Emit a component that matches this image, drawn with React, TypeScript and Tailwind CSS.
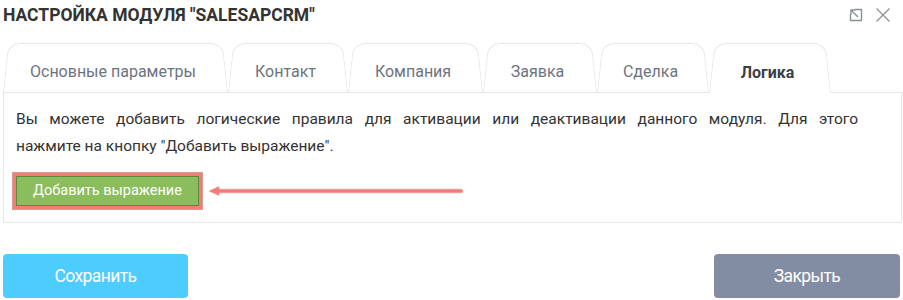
import React from 'react';

const tabs = [
  { label: 'Основные параметры', w: 'w-[225px]' },
  { label: 'Контакт', w: 'w-[120px]' },
  { label: 'Компания', w: 'w-[135px]' },
  { label: 'Заявка', w: 'w-[114px]' },
  { label: 'Сделка', w: 'w-[112px]' },
  { label: 'Логика', w: 'w-[122px]', active: true },
];

function Tab({ label, w, active }: { label: string; w: string; active?: boolean }) {
  return (
    <div
      className={`relative isolate flex items-center justify-center pt-[9px] pr-[5px] text-[16px] ${w} ${
        active ? 'h-[50px] -mb-px z-10 font-bold text-[#3a3f47]' : 'h-[49px] text-[#6d7480]'
      } before:absolute before:left-0 before:top-0 before:bottom-0 before:w-[55%] before:-z-10 before:bg-white before:border-l before:border-t before:border-[#e3e7ee] before:rounded-tl-[12px] before:origin-bottom before:[transform:skewX(-6deg)] after:absolute after:right-0 after:top-0 after:bottom-0 after:w-[55%] after:-z-10 after:bg-white after:border-r after:border-t after:border-[#e3e7ee] after:rounded-tr-[12px] after:origin-bottom after:[transform:skewX(6deg)]`}
    >
      {label}
    </div>
  );
}

export default function App() {
  return (
    <div className="w-[903px] h-[300px] bg-white font-['Roboto',sans-serif] overflow-hidden">
      {/* Header */}
      <div className="flex items-center justify-between h-[30px] pl-[3px] pr-[12px]">
        <h1 className="text-[17.5px] font-bold text-[#333]">НАСТРОЙКА МОДУЛЯ "SALESAPCRM"</h1>
        <div className="flex items-center gap-[12px] text-[#8b9099]">
          <svg width="14" height="14" viewBox="0 0 14 14" fill="none" stroke="currentColor" strokeWidth="1.4">
            <path d="M6 1.5h6.5v11h-11V6" />
            <path d="M9 9L2 2" />
            <path d="M2 6.5V2h4.5" />
          </svg>
          <svg width="16" height="16" viewBox="0 0 16 16" fill="none" stroke="currentColor" strokeWidth="1.3">
            <path d="M1.5 1.5l13 13M14.5 1.5l-13 13" />
          </svg>
        </div>
      </div>

      {/* Tabs */}
      <div className="flex items-end pl-[3px] mt-[13px]">
        {tabs.map((t) => (
          <Tab key={t.label} {...t} />
        ))}
      </div>

      {/* Panel */}
      <div className="ml-[3px] mr-px h-[131px] border border-[#e3e7ee] pl-[12px] pt-[13px]">
        <div className="text-[15.5px] leading-[27px] text-[#333]">
          <p className="w-[842px] text-justify [text-align-last:justify]">
            Вы можете добавить логические правила для активации или деактивации данного модуля. Для этого
          </p>
          <p>нажмите на кнопку "Добавить выражение".</p>
        </div>
        <div className="flex items-center mt-[12px] -ml-[4px]">
          <div className="bg-[#f47c78] border border-[#d99a92] p-[3px]">
            <button className="w-[183px] h-[30px] bg-[#8bbd5c] border-[1.5px] border-[#5b8a3f] text-white text-[14.5px]">
              Добавить выражение
            </button>
          </div>
          <svg width="256" height="12" viewBox="0 0 256 12" className="ml-[5px]">
            <path d="M1 6L11 1.5V4.2H253a1.8 1.8 0 0 1 0 3.6H11V10.5Z" fill="#f47c78" stroke="#e69a90" strokeWidth="0.6" />
          </svg>
        </div>
      </div>

      {/* Footer */}
      <div className="flex justify-between pl-[3px] pr-[3px] mt-[31px]">
        <button className="w-[185px] h-[44px] rounded-[4px] bg-[#4ccdfd] text-white text-[17.5px] tracking-[-0.6px]">
          Сохранить
        </button>
        <button className="w-[186px] h-[44px] rounded-[4px] bg-[#828ca3] text-white text-[17.5px] tracking-[-0.6px]">
          Закрыть
        </button>
      </div>
    </div>
  );
}
